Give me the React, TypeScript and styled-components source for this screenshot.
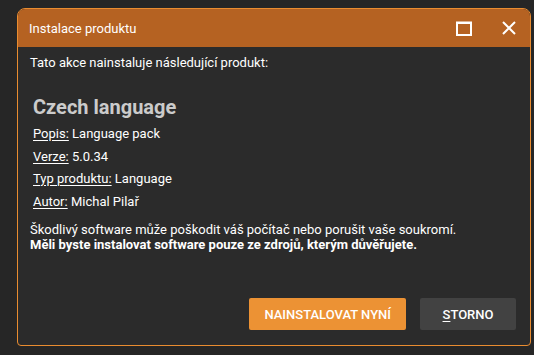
import React, { FC } from "react";
import styled, { createGlobalStyle } from "styled-components";

const GlobalStyle = createGlobalStyle`
  html, body {
    margin: 0;
    padding: 0;
    background: #262626;
    font-family: Roboto, "Liberation Sans", Arial, sans-serif;
  }
`;

const Page = styled.div`
  padding: 8px 0 0 17px;
  width: 534px;
  height: 355px;
  box-sizing: border-box;
`;

const Dialog = styled.div`
  width: 514px;
  height: 338px;
  box-sizing: border-box;
  display: flex;
  flex-direction: column;
  background: #2b2b2b;
  border: 1px solid #e98c30;
  border-radius: 8px 8px 4px 4px;
  overflow: hidden;
`;

const Header = styled.div`
  height: 38px;
  flex: none;
  display: flex;
  align-items: center;
  padding: 0 14px 0 11px;
  background: #b56222;
  color: #ffffff;
`;

const Title = styled.div`
  flex: 1;
  font-size: 13px;
  padding-top: 1px;
`;

const HeaderButton = styled.button`
  border: 0;
  padding: 0;
  background: transparent;
  display: flex;
  align-items: center;
  justify-content: center;
  color: #ffffff;
  margin-left: 30px;
`;

const Body = styled.div`
  flex: 1;
  display: flex;
  flex-direction: column;
  padding: 8px 14px 15px 12px;
  color: #ffffff;
  font-size: 13px;
`;

const Line = styled.div<{ bold?: boolean }>`
  line-height: 15px;
  font-weight: ${({ bold }) => (bold ? 700 : 400)};
`;

const Product = styled.div`
  margin: 25px 0 9px 3px;
`;

const ProductName = styled.div`
  font-size: 20px;
  line-height: 24px;
  font-weight: 700;
  color: #cbcbcb;
  margin-bottom: 4px;
`;

const InfoRow = styled.div`
  line-height: 22.5px;
`;

const Label = styled.span`
  text-decoration: underline;
  text-underline-offset: 2px;
`;

const Footer = styled.div`
  margin-top: auto;
  display: flex;
  justify-content: flex-end;
  gap: 14px;
`;

const Button = styled.button<{ primary?: boolean }>`
  height: 32px;
  min-width: 96px;
  padding: 0 15px;
  border: 0;
  border-radius: 2px;
  background: ${({ primary }) => (primary ? "#ec9234" : "#424242")};
  color: #ffffff;
  font-family: Roboto, "Liberation Sans", Arial, sans-serif;
  font-size: 13px;
  font-weight: 500;
  text-transform: uppercase;
`;

const AccessKey = styled.span`
  text-decoration: underline;
  text-underline-offset: 2px;
`;

const MaximizeIcon: FC = () => (
  <svg width="16" height="15" viewBox="0 0 16 15">
    <rect x="1" y="1.5" width="14" height="12.5" fill="none" stroke="#fff" strokeWidth="2" />
    <rect x="1" y="1" width="14" height="2" fill="#fff" />
  </svg>
);

const CloseIcon: FC = () => (
  <svg width="14" height="14" viewBox="0 0 14 14">
    <path d="M1 1 L13 13 M13 1 L1 13" stroke="#fff" strokeWidth="2" />
  </svg>
);

const info = [
  { label: "Popis:", value: "Language pack" },
  { label: "Verze:", value: "5.0.34" },
  { label: "Typ produktu:", value: "Language" },
  { label: "Autor:", value: "Michal Pilař" },
];

export default function App() {
  return (
    <>
      <GlobalStyle />
      <Page>
        <Dialog>
          <Header>
            <Title>Instalace produktu</Title>
            <HeaderButton>
              <MaximizeIcon />
            </HeaderButton>
            <HeaderButton>
              <CloseIcon />
            </HeaderButton>
          </Header>
          <Body>
            <Line>Tato akce nainstaluje následující produkt:</Line>
            <Product>
              <ProductName>Czech language</ProductName>
              {info.map((row) => (
                <InfoRow key={row.label}>
                  <Label>{row.label}</Label> {row.value}
                </InfoRow>
              ))}
            </Product>
            <Line>Škodlivý software může poškodit váš počítač nebo porušit vaše soukromí.</Line>
            <Line bold>Měli byste instalovat software pouze ze zdrojů, kterým důvěřujete.</Line>
            <Footer>
              <Button primary>Nainstalovat nyní</Button>
              <Button>
                <AccessKey>S</AccessKey>torno
              </Button>
            </Footer>
          </Body>
        </Dialog>
      </Page>
    </>
  );
}
